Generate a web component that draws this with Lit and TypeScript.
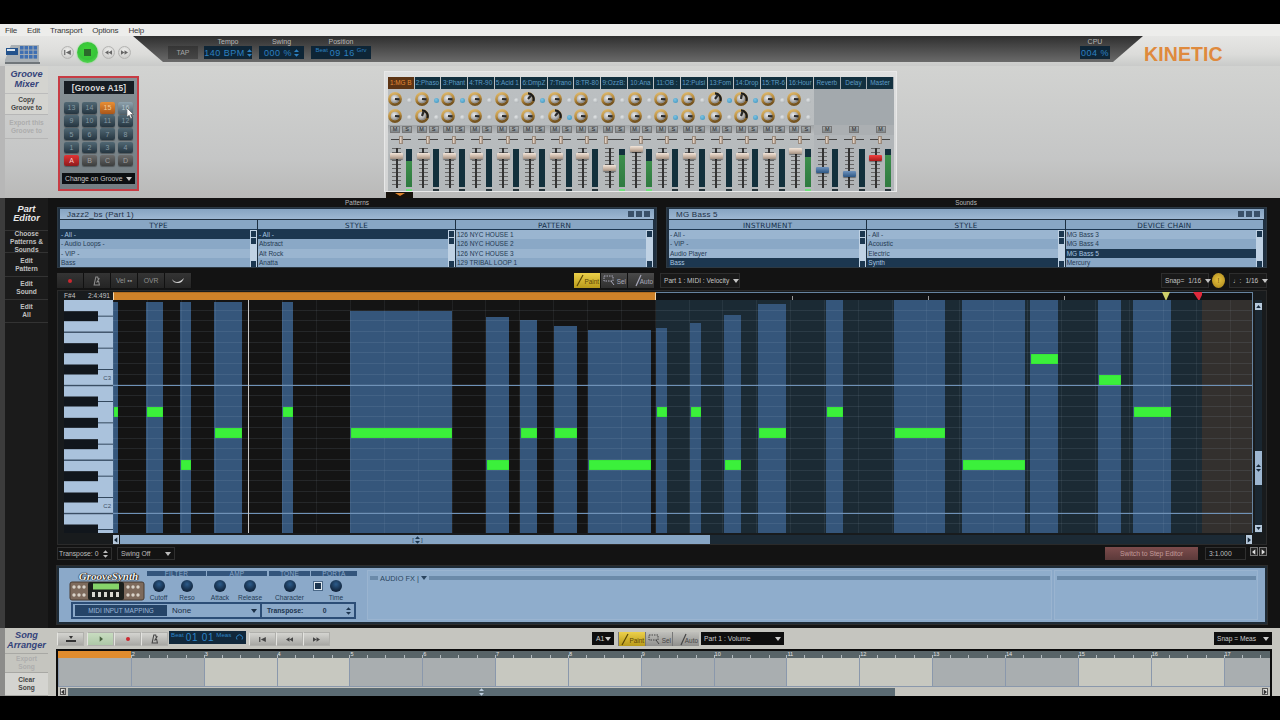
import { LitElement, html, css, svg, nothing } from "lit";
import { customElement } from "lit/decorators.js";

const CHANNELS = ["1:MG B","2:Phaso","3:Phant","4:TR-90","5:Acid 1","6:DmpZ","7:Trano","8:TR-80","9:OzzB:","10:Ana","11:OB :","12:Pulsi","13:Fom","14:Drop","15:TR-6","16:Hour","Reverb","Delay","Master"];
const BLUE_TOP = [1,2,5,10,12,13];
const BLUE_BOT = [6,10,11,13];
const DARK_TOP: Record<number, number> = {5:-50,12:-55,13:-80};
const DARK_BOT: Record<number, number> = {1:-70,6:-50,13:-70};
const FADER_Y: Record<number, number> = {8:19,9:0,15:2,16:21,17:25,18:9};
const METER: Record<number, number> = {0:26,8:32,9:26,15:30,18:32};

const GROOVES = [
  ["13","14","15","16"],["9","10","11","12"],["5","6","7","8"],["1","2","3","4"],["A","B","C","D"],
];

const PATTERN_LISTS = [
  { head:"TYPE", rows:["- All -","- Audio Loops -","- VIP -","Bass"], sel:0, thumb:[0,1] },
  { head:"STYLE", rows:["- All -","Abstract","Alt Rock","Anatta"], sel:0, thumb:[0,1] },
  { head:"PATTERN", rows:["126 NYC HOUSE 1","126 NYC HOUSE 2","126 NYC HOUSE 3","129 TRIBAL LOOP 1"], sel:-1, thumb:[0] },
];
const SOUND_LISTS = [
  { head:"INSTRUMENT", rows:["- All -","- VIP -","Audio Player","Bass"], sel:3, thumb:[0,1] },
  { head:"STYLE", rows:["- All -","Acoustic","Electric","Synth"], sel:3, thumb:[0,1,2] },
  { head:"DEVICE CHAIN", rows:["MG Bass 3","MG Bass 4","MG Bass 5","Mercury"], sel:2, thumb:[2] },
];

// x0, x1 (page px), top of the velocity bar, note row
const NOTES: [number,number,number,number][] = [
  [113,118,302,10],[146,163,302,10],[180,191,302,15],[214,242,302,12],[282,293,302,10],
  [350,452,311,12],[486,509,317,15],[520,537,320,12],[554,577,326,12],[588,651,330,15],
  [656,667,328,10],[690,701,323,10],[724,741,315,15],[758,786,304,12],[826,843,300,10],
  [894,945,300,12],[962,1025,300,15],[1030,1058,300,5],[1098,1121,300,7],[1133,1171,300,10],
];
const ROW = 10.667;
const BLACK_ROWS = [1,4,6,9,11,13,16,18,21];

const SEGMENTS = [0,0,1,1,0,0,1,1,0,0,1,1,0,0,1,1,0];

const updown = () => html`<svg class="ud" viewBox="0 0 6 9" width="5" height="8"><path d="M3 0 6 3.4H0zM3 9 0 5.6H6z" fill="currentColor"/></svg>`;
const triR = () => html`<svg viewBox="0 0 6 8" width="4" height="6"><path d="M1 0 6 4 1 8z" fill="currentColor"/></svg>`;
const triL = () => html`<svg viewBox="0 0 6 8" width="4" height="6"><path d="M5 0 0 4 5 8z" fill="currentColor"/></svg>`;
const triU = () => html`<svg viewBox="0 0 6 4" width="5" height="3"><path d="M3 0 6 4H0z" fill="currentColor"/></svg>`;
const triD = () => html`<svg viewBox="0 0 6 4" width="5" height="3"><path d="M3 4 6 0H0z" fill="currentColor"/></svg>`;
const prev = () => html`<svg viewBox="0 0 8 6" width="7" height="5"><path d="M0 0H1.4V6H0zM8 0V6L2 3z" fill="currentColor"/></svg>`;
const rew = () => html`<svg viewBox="0 0 9 6" width="7" height="5"><path d="M4.5 0V6L0 3zM9 0V6L4.5 3z" fill="currentColor"/></svg>`;
const ff = () => html`<svg viewBox="0 0 9 6" width="7" height="5"><path d="M0 0V6L4.5 3zM4.5 0V6L9 3z" fill="currentColor"/></svg>`;
const metro = () => html`<svg viewBox="0 0 10 12" width="8" height="10"><path d="M3.5 1h2.4L8 11H1.4zM4.5 8 8 2.5" fill="none" stroke="currentColor" stroke-width="1.3"/></svg>`;

function knob(ch: number, row: number) {
  const dark = row === 0 ? DARK_TOP[ch] : DARK_BOT[ch];
  const isDark = dark !== undefined;
  const a = ((isDark ? dark : 5) * Math.PI) / 180;
  const px = 7 + Math.cos(a) * 4.6, py = 7 + Math.sin(a) * 4.6;
  return html`<svg class="knob" viewBox="0 0 14 14" width="14" height="14">
    <circle cx="7" cy="7" r="5.6" fill="none" stroke="url(#kring)" stroke-width="2.6"/>
    ${isDark ? svg`<path d="M7 1.4A5.6 5.6 0 0 1 12.3 9" fill="none" stroke="#1c1c1c" stroke-width="2.2"/>` : nothing}
    <circle cx="7" cy="7" r="4" fill="url(#kcap)"/>
    <line x1="7" y1="7" x2=${px} y2=${py} stroke="#2a2a2a" stroke-width="2.2"/>
  </svg>`;
}

@customElement("app-root")
export class AppRoot extends LitElement {
  static styles = css`
    :host { display:block; width:1280px; height:720px; background:#000; font-family:"Liberation Sans",Arial,sans-serif; overflow:hidden; }
    * { box-sizing:border-box; }
    .app { display:flex; flex-direction:column; height:720px; padding:24px 0; }
    svg { display:block; flex:none; }
    .defs { width:0; height:0; }

    .menu { height:12px; background:#ededeb; display:flex; gap:10px; padding-left:5px; align-items:center; font-size:8px; color:#3a3a3a; flex:none; }
    .menu span { letter-spacing:-.2px; }

    .transport { height:30px; flex:none; display:flex; background:linear-gradient(#e6e6e4,#dcdcda 60%,#c9cac9); }
    .t-left { width:133px; flex:none; display:flex; align-items:center; padding:6px 0 0 5px; }
    .t-logo { margin:-1px 21px 0 0; }
    .round { width:13px; height:13px; border-radius:50%; background:radial-gradient(circle at 50% 35%,#f0f0ee,#c4c4c2); border:1px solid #b4b4b2; color:#666; display:flex; align-items:center; justify-content:center; flex:none; margin-top:-4px; }
    .go { width:21px; height:21px; border-radius:50%; background:radial-gradient(circle at 50% 40%,#3ed636,#37c43a 55%,#71e66a); box-shadow:0 0 2px #7bd97b; display:flex; align-items:center; justify-content:center; margin:-4px 4px 0 3px; flex:none; }
    .go i { width:7px; height:7px; background:#2b6a2b; display:block; }
    .band { width:1010px; height:26px; flex:none; clip-path:polygon(0 0,100% 0,980px 100%,30px 100%); background:linear-gradient(#2f2f2f,#6a6a6a); display:flex; padding:2px 33px 0 35px; color:#b5b5b5; }
    .tap { width:30px; height:13px; margin:8px 6px 0 0; background:linear-gradient(#353535,#474747); font-size:7px; display:flex; align-items:center; justify-content:center; color:#a4a4a4; }
    .field { display:flex; flex-direction:column; align-items:center; margin-right:7px; }
    .field label { font-size:7px; height:8px; line-height:8px; color:#b8b8b8; }
    .lcd { height:13px; background:#0e2536; color:#2c80c0; font-size:9px; letter-spacing:.5px; display:flex; align-items:center; justify-content:center; gap:2px; white-space:nowrap; }
    .lcd small { font-size:6px; align-self:flex-start; letter-spacing:0; margin-top:1px; }
    .cpu { margin:0 0 0 auto; }
    .kinetic { color:#df8a3d; font-weight:bold; font-size:19.5px; margin:9px 0 0 1px; letter-spacing:.1px; line-height:18px; }

    .groove-row { height:132px; flex:none; display:flex; background:linear-gradient(#d2d3d1,#c5c6c6 70%,#b9b9b8); }
    .side { width:50px; flex:none; padding-left:5px; display:flex; flex-direction:column; }
    .groove-row .side { background:linear-gradient(90deg,#b7b7b7 0 5px,transparent 5px); }
    .song-row .side { background:linear-gradient(90deg,#8c8c8a 0 5px,transparent 5px); }
    .part-row .side { background:linear-gradient(90deg,#3c3c3c 0 5px,#1b1b1b 5px 48px,transparent 48px); }
    .tab { width:43px; flex:none; display:flex; align-items:center; justify-content:center; text-align:center; font-size:6.6px; line-height:8px; font-weight:bold; color:#444; border-bottom:1px solid #b6b6b6; white-space:pre-line; }
    .tab.off { color:#adadad; }
    .tab.title { font-style:italic; font-size:9.2px; line-height:9.5px; color:#34437a; border-bottom-color:#bcbcbc; }
    .tab.dk { color:#c0c0c0; border-bottom-color:#333; }
    .tab.dk.title { color:#e8e8e8; }
    .song-row .tab { border-bottom-color:#a8a8a4; }
    .tab.lite { background:#d4d4d0; }

    .g-panel { width:81px; height:115px; margin:10px 0 0 8px; border:2px solid #c73c44; background:linear-gradient(#87928f,#737d82); background:linear-gradient(#869196,#737d82); padding:3px 0 0 4px; position:relative; flex:none; }
    .g-title { width:70px; height:13px; background:#161c22; color:#d8d8d8; font-size:8.4px; font-weight:bold; display:flex; align-items:center; justify-content:center; letter-spacing:.2px; }
    .g-grid { display:grid; grid-template-columns:repeat(4,15px); grid-auto-rows:11.5px; column-gap:3px; row-gap:1.7px; margin-top:8px; }
    .g-btn { border-radius:2px; background:linear-gradient(#516874,#253540); color:#8599a4; font-size:7px; display:flex; align-items:center; justify-content:center; box-shadow:0 1px 1px #0005; }
    .g-btn.on { background:linear-gradient(#e88f35,#a9561a); color:#f3cc98; }
    .g-btn.red { background:linear-gradient(#e23434,#8d1a1c); color:#f6c9c9; }
    .g-btn.gr { background:linear-gradient(#6c6c6c,#3c3e3e); color:#a0a0a0; }
    .g-btn.hov { background:linear-gradient(#8fa3ae,#50626d); color:#b8c6cd; }
    .g-sel { width:73px; height:11px; margin:7px 0 0 -2px; background:#0c0f12; color:#c8c8c8; font-size:6.8px; display:flex; align-items:center; justify-content:space-between; padding:0 3px; }
    .arr { width:0; height:0; border:3px solid transparent; border-top:4px solid currentColor; border-bottom:0; display:block; flex:none; }
    .cursor { position:absolute; left:67px; top:30px; }

    .mixer-wrap { margin:5px 0 0 245px; flex:none; }
    .mixer { width:513px; height:121px; padding:5px 4px 0 3px; background:linear-gradient(#dfe0e0,#d3d4d4); border:1px solid #e8e8e8; display:grid; grid-template-columns:repeat(19,26.63px); }
    .ch { display:flex; flex-direction:column; height:114px; background:linear-gradient(#bcc0c2,#b4b8ba); }
    .ch.rt { background:linear-gradient(#a3a9ad 0 48px,#b1b5b8 48px); }
    .ch-h { height:12px; flex:none; background:#12303f; color:#5d9cc6; font-size:6.4px; line-height:12px; margin-right:1px; text-align:center; white-space:nowrap; overflow:hidden; }
    .ch-h.on { background:#5c3414; color:#e58b34; }
    .ch-knobs { height:36px; flex:none; padding-top:3px; display:flex; flex-direction:column; gap:3px; }
    .k-row { display:flex; height:14px; }
    .k-dot { width:5px; height:5px; border-radius:50%; margin:6px 0 0 5px; background:radial-gradient(circle at 40% 35%,#e4e7e8,#9ea3a6); }
    .k-dot.b { background:radial-gradient(circle at 40% 35%,#7cc3e4,#3a8fb8); }
    .ms { height:10px; flex:none; display:flex; gap:2px; padding:1px 0 0 2px; background:linear-gradient(#a0a4a6,#bdc0c2); }
    .ch.rt .ms { justify-content:center; padding-left:0; background:#abafb2; }
    .ms b { width:10px; height:7px; background:linear-gradient(#a8adb0,#7f868a); border:1px solid #777; font-size:5.5px; line-height:5px; color:#222; text-align:center; font-weight:normal; }
    .pan { height:11px; flex:none; position:relative; }
    .pan::before { content:""; position:absolute; left:3px; width:20px; top:4px; height:1px; background:#444; }
    .pan i { position:absolute; top:1px; width:4px; height:8px; background:linear-gradient(90deg,#efe0d2,#b09c8c); border:1px solid #9a8a7c; }
    .fad { height:45px; flex:none; position:relative; }
    .fad-track { position:absolute; left:4px; width:9px; top:2px; height:40px; background:repeating-linear-gradient(#666 0 1px,transparent 1px 4px); }
    .fad-track::after { content:""; position:absolute; left:3.5px; width:2px; top:0; bottom:0; background:#333; }
    .cap { position:absolute; left:2px; width:13px; height:6px; border-radius:1px; background:linear-gradient(#f3e6da,#c8b4a4 60%,#a08f80); box-shadow:0 1px 1px #0006; }
    .cap.bl { background:linear-gradient(#6f93bd,#2c5684); }
    .cap.rd { background:linear-gradient(#f04040,#a81818); }
    .meter { position:absolute; left:18px; width:6px; top:3px; height:38px; background:#12303c; display:flex; flex-direction:column; justify-content:flex-end; }
    .meter i { display:block; background:linear-gradient(#3d8f4c,#2f7a40); }
    .led { position:absolute; left:18px; width:6px; top:43px; height:2px; background:#26343a; }
    .led.on { background:#6fe07a; }
    .m-tab { width:27px; height:6px; margin-left:2px; background:#17120c; display:flex; justify-content:center; color:#e0852c; }
    .m-tab i { width:0; height:0; border:5px solid transparent; border-top:3px solid currentColor; border-bottom:0; margin-top:1px; }

    .part-row { height:430px; flex:none; display:flex; background:#131313; }
    .p-main { width:1210px; margin-left:7px; display:flex; flex-direction:column; flex:none; color:#bbb; }
    .p-labels { height:9px; display:grid; grid-template-columns:600px 600px; column-gap:9px; font-size:6.4px; line-height:9px; text-align:center; color:#b9b9b9; flex:none; }
    .browsers { display:grid; grid-template-columns:600px 601px; column-gap:9px; height:61px; flex:none; }
    .br { border:1px solid #2d3943; background:#203040; padding:1px 2px 0; height:61px; overflow:hidden; }
    .br-title { height:10px; background:linear-gradient(#86a4c2,#9db7d2); color:#1e3046; font-size:8px; padding-left:7px; display:flex; justify-content:space-between; align-items:center; letter-spacing:.25px; margin-bottom:1px; }
    .br-ico { display:flex; gap:2px; margin-right:4px; color:#3a5068; }
    .br-ico i { width:6px; height:6px; background:currentColor; display:block; }
    .br-cols { display:grid; grid-template-columns:1fr 1fr 1fr; }
    .br-col { border-right:1px solid #1d2f40; min-width:0; }
    .br-head { height:10px; background:#88a6c4; color:#122c46; font-size:7.2px; font-family:"DejaVu Sans",sans-serif; text-align:center; line-height:11px; border-bottom:1px solid #1d3650; letter-spacing:.2px; overflow:hidden; }
    .br-body { display:flex; height:38px; }
    .br-rows { flex:1; min-width:0; }
    .br-row { height:9.4px; font-size:6.5px; line-height:9.4px; padding-left:1px; color:#253a52; background:#9ab5d0; white-space:nowrap; overflow:hidden; }
    .br-row.alt { background:#8aa8c6; }
    .br-row.sel { background:#1c3750; color:#a9c6e0; }
    .br-sc { width:7px; flex:none; background:#c0d2e4; display:flex; flex-direction:column; gap:1px; padding:1px; }
    .br-sc i { height:6px; background:#1c3750; display:block; }
    .br-sc i.end { margin-top:auto; }

    .p-tools { height:15px; margin-top:5px; display:flex; flex:none; font-size:6.8px; }
    .dbtn { width:27px; height:15px; background:linear-gradient(#343434,#242424); border-right:1px solid #111; display:flex; align-items:center; justify-content:center; color:#8f8f8f; flex:none; }
    .dbtn .dot { width:4px; height:4px; border-radius:50%; background:#cc2830; }
    .modes { display:flex; margin-left:381px; flex:none; }
    .mode { width:27px; height:15px; display:flex; align-items:center; justify-content:flex-end; font-size:6.4px; color:#aab; background:linear-gradient(#4a4a4a,#2f2f2f); border-left:1px solid #111; position:relative; padding:2px 1px 0 0; overflow:hidden; white-space:nowrap; }
    .mode.on { background:linear-gradient(#ecd04a,#b89a1a); color:#5a4604; }
    .mode svg { position:absolute; left:2px; top:1px; }
    .dsel { border:1px solid #2d2d2d; height:15px; display:flex; align-items:center; gap:4px; padding:0 3px; color:#c4c4c4; font-size:6.6px; background:#191919; flex:none; white-space:nowrap; }
    .d-part { margin-left:6px; width:80px; justify-content:space-between; }
    .right { margin-left:auto; display:flex; flex:none; align-items:center; }
    .gold { width:13px; height:15px; border-radius:50%; background:radial-gradient(circle at 50% 45%,#e6c33e,#a67f18); margin:0 4px 0 3px; color:#5c4405; font-size:7px; text-align:center; line-height:15px; }

    .roll-panel { height:255px; margin-top:2px; border:1px solid #2a2a2a; padding:1px 0 0 6px; flex:none; background:#181b1d; }
    .ruler-row { display:flex; height:8px; }
    .r-info { width:49px; flex:none; display:flex; justify-content:space-between; font-size:6.6px; line-height:8px; color:#c4c4c4; padding-right:3px; }
    .ruler { width:1140px; height:8px; flex:none; position:relative; background:#101214; border-top:1px solid #66839f; border-right:1px solid #66839f; }
    .ruler .orange { position:absolute; left:0; top:-1px; width:543px; height:9px; background:#cf8229; border:1px solid #f3d8ae; border-top-color:#b56f20; }
    .ruler u { position:absolute; top:3px; width:1px; height:4px; background:#999; }
    .mk { position:absolute; top:-1px; }
    .roll-body { display:flex; height:233px; }
    .keys { width:49px; height:233px; flex:none; position:relative; }
    .keys span { position:absolute; right:2px; font-size:6px; color:#3a4e66; line-height:7px; }
    .roll { width:1140px; height:233px; flex:none; position:relative; overflow:hidden; border-right:1px solid #66839f; background:linear-gradient(90deg,#141414 0 543px,#1b2a34 543px 1089px,#33302e 1089px); }
    .vel { position:absolute; bottom:0; background:#35567b; }
    .lines { position:absolute; inset:0; background:
      repeating-linear-gradient(180deg,transparent 0 9.667px,rgba(185,205,225,.1) 9.667px 10.667px),
      repeating-linear-gradient(90deg,rgba(200,215,230,.07) 0 1px,transparent 1px 33.857px); }
    .oct { position:absolute; left:0; right:0; height:1px; background:#6f92b8; }
    .head { position:absolute; left:135px; top:0; bottom:0; width:1px; background:#c9c9c9; }
    .note { position:absolute; height:10px; background:#3bf03b; box-shadow:inset 0 0 1px #1c9c1c; }
    .vsc { width:7px; height:233px; margin-left:2px; background:#1a2731; display:flex; flex-direction:column; flex:none; color:#16283a; }
    .vsc i { display:flex; height:7px; background:#b6c9dc; align-items:center; justify-content:center; flex:none; }
    .vsc i.up { margin-top:3px; }
    .vsc i.th { height:34px; margin-top:141px; background:#9db6d0; }
    .vsc i.dn { margin-top:auto; margin-bottom:1px; }
    .hsc { margin-left:49px; height:10px; margin-top:1px; width:1140px; display:flex; align-items:stretch; }
    .hsc b { width:6px; margin:1px 1px 0 0; background:#b6c9dc; color:#16283a; display:flex; align-items:center; justify-content:center; flex:none; }
    .hsc .fill { width:590px; flex:none; margin-top:1px; background:#86a5c4; display:flex; justify-content:center; color:#1c3750; padding-left:5px; font-size:6px; line-height:8px; align-items:center; gap:1px; }
    .hsc .rest { flex:1; margin:1px 1px 0 0; background:#1c2a35; }

    .opts { height:13px; margin-top:2px; display:flex; flex:none; font-size:6.8px; color:#bdbdbd; }
    .osel { height:13px; border:1px solid #2f2f2f; display:flex; align-items:center; justify-content:space-between; padding:0 3px 0 1px; flex:none; }
    .step { width:93px; height:13px; background:linear-gradient(#7c4c4c,#5c3a3a); color:#c39a9a; font-size:6.8px; display:flex; align-items:center; justify-content:center; margin-right:7px; }
    .sq { width:8px; height:9px; margin-left:1px; background:#232323; border:1px solid #777; color:#ddd; display:flex; align-items:center; justify-content:center; }

    .synth { height:58px; margin-top:6px; border:2px solid #1e2b36; outline:1px solid #2c2c2c; background:#8ba9c9; display:flex; padding:1px 0 0 10px; flex:none; color:#233b55; }
    .s-left { width:289px; flex:none; }
    .s-top { display:flex; height:32px; }
    .s-logo { width:76px; flex:none; }
    .s-name { font-family:"Liberation Serif",serif; font-style:italic; font-weight:bold; font-size:11px; line-height:10px; color:#f4f4f4; text-align:center; text-shadow:0 0 1px #000,0 0 1px #000,1px 0 1px #222; margin-top:2px; margin-left:3px; }
    .s-sec { flex:none; margin-right:1px; }
    .s-head { height:5px; margin-top:2px; background:#33557c; color:#8ba9c9; font-size:6.5px; line-height:5px; text-align:center; overflow:hidden; letter-spacing:.3px; }
    .s-items { display:flex; }
    .s-item { display:flex; flex-direction:column; align-items:center; font-size:6.6px; flex:none; white-space:nowrap; }
    .s-k { width:12px; height:12px; border-radius:50%; margin-top:4px; background:radial-gradient(circle at 50% 35%,#2c5b8a,#12263e 70%); }
    .s-c { width:8px; height:8px; margin-top:6px; margin-bottom:-2px; background:#1d3650; border:1px solid #dfe8f0; outline:1px solid #4a6888; }
    .s-item span { margin-top:2px; line-height:8px; }
    .s-map { width:285px; height:17px; margin:1px 0 0 2px; border:2px solid #2c4d76; display:flex; align-items:center; font-size:8px; }
    .s-map .dark { width:92px; height:11px; margin-left:2px; background:#254468; color:#9cb8d8; font-size:6.4px; display:flex; align-items:center; justify-content:center; flex:none; }
    .s-map .none { width:93px; margin-left:2px; display:flex; justify-content:space-between; align-items:center; padding:0 3px; font-size:8px; border-right:2px solid #2c4d76; height:13px; flex:none; color:#1b2f47; }
    .s-map .tr { flex:1; display:flex; justify-content:space-between; padding:0 3px 0 5px; font-weight:bold; font-size:6.8px; align-items:center; color:#1d3550; }
    .fxp { height:50px; margin-top:1px; border:1px solid #9ab4d0; background:#8fadcc; flex:none; padding:4px 1px 0 2px; font-size:7.4px; color:#2a4560; }
    .fx1 { width:685px; margin-left:9px; }
    .fx2 { width:204px; margin-left:2px; }
    .fx-h { display:flex; align-items:center; gap:2px; height:6px; white-space:nowrap; }
    .fx-h u { flex:none; height:4px; background:#6b8aa9; display:block; }
    .fx-h u.g { flex:1; }

    .song-row { height:68px; flex:none; display:flex; background:#c5c5bf; }
    .s-main { width:1215px; margin-left:7px; flex:none; }
    .s-tools { height:21px; padding-top:4px; display:flex; font-size:6.6px; color:#333; }
    .lbtn { width:27px; height:14px; background:linear-gradient(#d4d4d0,#a8a8a4); border:1px solid #b0b0ac; border-left-color:#e4e4e0; display:flex; align-items:center; justify-content:center; color:#444; flex:none; }
    .lbtn.pl { background:linear-gradient(#c8dcc0,#aec8a8); color:#47603f; }
    .lbtn .dot { width:4px; height:4px; border-radius:50%; background:#cc2830; }
    .lbtn.s1 { margin-right:3px; }
    .song-lcd { width:77px; height:13px; margin:-1px 3px 0 1px; background:#11283b; color:#2c84c6; font-size:10px; display:flex; padding:0 2px; letter-spacing:.7px; gap:2px; align-items:center; flex:none; }
    .song-lcd small { font-size:6.2px; letter-spacing:0; align-self:flex-start; }
    .song-lcd svg { margin-left:auto; }
    .lbtns { display:flex; flex:none; }
    .sel-a { margin-left:262px; width:22px; height:13px; background:#0e0e0e; color:#ccc; font-size:6.8px; display:flex; align-items:center; justify-content:space-between; padding:0 3px 0 4px; flex:none; }
    .modes.lt { margin-left:4px; }
    .modes.lt .mode { height:14px; background:linear-gradient(#c0c0bc,#8f8f8d); color:#444; border-left-color:#777; }
    .modes.lt .mode.on { background:linear-gradient(#ecd04a,#b89a1a); color:#5a4604; }
    .sel-p { margin-left:2px; width:83px; height:13px; background:#0e0e0e; color:#ccc; font-size:6.8px; display:flex; align-items:center; justify-content:space-between; padding:0 3px; flex:none; }
    .sel-s { margin-left:auto; width:58px; height:13px; background:#0e0e0e; color:#ccc; font-size:6.6px; display:flex; align-items:center; justify-content:space-between; padding:0 3px; flex:none; }
    .tl { height:47px; border:2px solid #0c0c0c; border-bottom:0; overflow:hidden; width:1216px; margin-left:-1px; }
    .tl-row { display:flex; }
    .tl-seg { width:72.85px; flex:none; }
    .tl-rul { height:7px; background:#586468; }
    .tl-rul .tl-seg { height:7px; color:#e4e4e4; font-size:5.5px; line-height:6px; padding-left:1px; background:repeating-linear-gradient(90deg,#b4bcc0 0 1px,transparent 1px 18.2px) left bottom/100% 3px no-repeat; }
    .tl-rul .tl-seg.o { background:#e08c2e; }
    .tl-track { height:29px; }
    .tl-track .tl-seg { height:29px; background:#a9aeb0; border-left:1px solid #8a98ac; border-bottom:1px solid #8a98ac; }
    .tl-track .tl-seg.l { background:#c7c8c0; }
    .tl-sc { height:9px; display:flex; padding:1px 2px 0; background:#c5c5bf; }
    .tl-sc b { width:6px; height:7px; background:#e4e4e0; border:1px solid #555; color:#333; display:flex; align-items:center; justify-content:center; flex:none; }
    .tl-sc .thumb { width:827px; margin-left:2px; height:8px; background:#5b6b73; color:#bcd; display:flex; align-items:center; justify-content:center; flex:none; }
  `;

  private modes(cls = "") {
    return html`<div class="modes ${cls}">
      <div class="mode on"><svg width="12" height="13" viewBox="0 0 12 13"><path d="M1 12 7 1" stroke="#5a4604" stroke-width="1.2"/></svg><span>Paint</span></div>
      <div class="mode"><svg width="12" height="13" viewBox="0 0 12 13"><rect x="1" y="2" width="9" height="5" fill="none" stroke="currentColor" stroke-dasharray="1.5 1"/><path d="M8 7 11 11" stroke="currentColor"/></svg><span>Sel</span></div>
      <div class="mode"><svg width="14" height="13" viewBox="0 0 14 13"><path d="M6 12 11 1" stroke="currentColor" stroke-width="1.2"/></svg><span>Auto</span></div>
    </div>`;
  }

  private tab(text: string, h: number, cls = "") {
    return html`<div class="tab ${cls}" style="height:${h}px">${text}</div>`;
  }

  private channel(name: string, i: number) {
    const rt = i >= 16;
    const y = FADER_Y[i] ?? 7;
    const capCls = i === 16 || i === 17 ? "bl" : i === 18 ? "rd" : "";
    const m = METER[i];
    return html`<div class="ch ${rt ? "rt" : ""}">
      <div class="ch-h ${i === 0 ? "on" : ""}">${name}</div>
      <div class="ch-knobs">
        ${rt ? nothing : [0, 1].map((r) => html`<div class="k-row">
          ${knob(i, r)}<i class="k-dot ${(r === 0 ? BLUE_TOP : BLUE_BOT).includes(i) ? "b" : ""}"></i></div>`)}
      </div>
      <div class="ms"><b>M</b>${rt ? nothing : html`<b>S</b>`}</div>
      <div class="pan"><i style="left:${i === 8 ? 3 : 11}px"></i></div>
      <div class="fad">
        <div class="fad-track"></div>
        <div class="meter">${m ? html`<i style="height:${m}px"></i>` : nothing}</div>
        <div class="led ${m && i !== 18 ? "on" : ""}"></div>
        <div class="cap ${capCls}" style="top:${y}px"></div>
      </div>
    </div>`;
  }

  private browser(title: string, lists: typeof PATTERN_LISTS) {
    return html`<div class="br">
      <div class="br-title"><span>${title}</span><span class="br-ico"><i></i><i></i><i></i></span></div>
      <div class="br-cols">
        ${lists.map((l) => html`<div class="br-col">
          <div class="br-head">${l.head}</div>
          <div class="br-body">
            <div class="br-rows">${l.rows.map((r, i) => html`<div class="br-row ${i === l.sel ? "sel" : i % 2 ? "alt" : ""}">${r}</div>`)}</div>
            <div class="br-sc"><i></i>${l.thumb.length > 1 ? html`<i></i>` : nothing}<i class="end"></i></div>
          </div>
        </div>`)}
      </div>
    </div>`;
  }

  private keys() {
    return html`<div class="keys">
      <svg width="49" height="233" viewBox="0 0 49 233">
        <rect width="49" height="233" fill="#aac2dc"/>
        ${BLACK_ROWS.map((r) => svg`<rect x="0" y=${r * ROW + 0.5} width="34" height="10" fill="#11161c"/><rect x="34" y=${r * ROW + 5} width="15" height="1" fill="#33485e"/>`)}
        ${[2, 7, 14, 19].map((r) => svg`<rect x="0" y=${(r + 1) * ROW - 0.5} width="49" height="1.4" fill="#3a4e64"/>`)}
      </svg>
      <span style="top:75px">C3</span><span style="top:203px">C2</span>
    </div>`;
  }

  private roll() {
    return html`<div class="roll">
      ${NOTES.map(([a, b, top]) => html`<div class="vel" style="left:${a - 113}px;width:${b - a}px;top:${top - 300}px"></div>`)}
      <div class="lines"></div>
      <div class="oct" style="top:85px"></div><div class="oct" style="top:213px"></div>
      <div class="head"></div>
      ${NOTES.map(([a, b, , r]) => html`<div class="note" style="left:${a - 112}px;width:${b - a - 1}px;top:${r * ROW + 0.3}px"></div>`)}
    </div>`;
  }

  private synthLeft() {
    const sec = (name: string, w: number, items: [string, number, boolean?][]) => html`<div class="s-sec" style="width:${w}px">
      <div class="s-head">${name}</div>
      <div class="s-items">${items.map(([l, iw, chk]) => html`<div class="s-item" style="width:${iw}px">
        ${chk ? html`<i class="s-c"></i>` : html`<i class="s-k"></i>`}<span>${l}</span></div>`)}</div>
    </div>`;
    return html`<div class="s-left">
      <div class="s-top">
        <div class="s-logo">
          <div class="s-name">GrooveSynth</div>
          <svg width="76" height="20" viewBox="0 0 76 20">
            <rect x="1" y="1" width="74" height="18" rx="2" fill="#7d6a5c"/>
            <rect x="1" y="1" width="74" height="18" rx="2" fill="none" stroke="#4a3c33"/>
            <rect x="19" y="1" width="36" height="18" rx="2" fill="#1b1f1c"/>
            <rect x="24" y="2.5" width="26" height="6" fill="#86d46a"/>
            ${[23, 29, 35, 41, 47].map((x) => svg`<rect x=${x} y="11" width="3" height="5" fill="#d8d8d0"/>`)}
            ${[5, 10, 15, 59, 64, 69].map((x) => svg`<circle cx=${x} cy="6" r="1.7" fill="#d8d2c8"/><circle cx=${x} cy="14" r="1.7" fill="#d8d2c8"/>`)}
          </svg>
        </div>
        <div class="s-sec" style="width:1px"></div>
        ${sec("FILTER", 59, [["Cutoff", 23], ["Reso", 34]])}
        ${sec("AMP", 60, [["Attack", 26], ["Release", 34]])}
        <div style="width:1px"></div>
        ${sec("TONE", 41, [["Character", 41]])}
        ${sec("PORTA", 46, [["", 14, true], ["Time", 22]])}
      </div>
      <div class="s-map">
        <div class="dark">MIDI INPUT MAPPING</div>
        <div class="none"><span>None</span><i class="arr"></i></div>
        <div class="tr"><span>Transpose:</span><span>0</span>${updown()}</div>
      </div>
    </div>`;
  }

  render() {
    return html`<div class="app">
      <svg class="defs"><defs>
        <linearGradient id="kring" x1="0" y1="0" x2="0.3" y2="1"><stop offset="0" stop-color="#dcb86e"/><stop offset=".55" stop-color="#b98c3c"/><stop offset="1" stop-color="#755420"/></linearGradient>
        <radialGradient id="kcap" cx=".4" cy=".35" r=".8"><stop offset="0" stop-color="#ececec"/><stop offset=".6" stop-color="#aeaeae"/><stop offset="1" stop-color="#5e5e5e"/></radialGradient>
      </defs></svg>

      <div class="menu"><span>File</span><span>Edit</span><span>Transport</span><span>Options</span><span>Help</span></div>

      <div class="transport">
        <div class="t-left">
          <svg class="t-logo" width="35" height="22" viewBox="0 0 35 22">
            <path d="M0 17 6 2H34V19H0z" fill="#aab0b4"/>
            <rect x="1" y="5" width="12" height="7" fill="#23528c"/><rect x="2" y="6" width="8" height="2" fill="#dde6ee"/>
            ${[15, 19.5, 24, 28.5].map((x) => [3, 7.5, 12].map((y) => svg`<rect x=${x} y=${y} width="3.6" height="3.6" fill="#3f6fb2"/>`))}
            <rect y="19" width="35" height="2" fill="#70767a"/>
          </svg>
          <div class="round">${prev()}</div>
          <div class="go"><i></i></div>
          <div class="round" style="margin-right:3px">${rew()}</div>
          <div class="round">${ff()}</div>
        </div>
        <div class="band">
          <div class="tap">TAP</div>
          <div class="field"><label>Tempo</label><div class="lcd" style="width:48px">140 BPM ${updown()}</div></div>
          <div class="field"><label>Swing</label><div class="lcd" style="width:45px">000 % ${updown()}</div></div>
          <div class="field"><label>Position</label><div class="lcd" style="width:60px"><small>Beat</small>09 16<small>Grv</small></div></div>
          <div class="field cpu"><label>CPU</label><div class="lcd" style="width:30px">004 %</div></div>
        </div>
        <div class="kinetic">KINETIC</div>
      </div>

      <div class="groove-row">
        <div class="side">
          ${this.tab("Groove\nMixer", 28, "title lite")}
          ${this.tab("Copy\nGroove to", 21, "lite")}
          ${this.tab("Export this\nGroove to", 24, "off")}
        </div>
        <div class="g-panel">
          <div class="g-title">[Groove A15]</div>
          <div class="g-grid">
            ${GROOVES.flat().map((g) => html`<div class="g-btn ${g === "15" ? "on" : g === "16" ? "hov" : g === "A" ? "red" : "BCD".includes(g) ? "gr" : ""}">${g}</div>`)}
          </div>
          <div class="g-sel"><span>Change on Groove</span><i class="arr"></i></div>
          <svg class="cursor" width="7" height="11" viewBox="0 0 7 11"><path d="M0 0 6.5 6.5H3.6L5.2 10 3.8 10.8 2.2 7.2 0 9z" fill="#fff" stroke="#222" stroke-width=".4"/></svg>
        </div>
        <div class="mixer-wrap">
          <div class="mixer">${CHANNELS.map((c, i) => this.channel(c, i))}</div>
          <div class="m-tab"><i></i></div>
        </div>
      </div>

      <div class="part-row">
        <div class="side">
          ${this.tab("Part\nEditor", 33, "title dk")}
          ${this.tab("Choose\nPatterns &\nSounds", 22, "dk")}
          ${this.tab("Edit\nPattern", 24, "dk")}
          ${this.tab("Edit\nSound", 23, "dk")}
          ${this.tab("Edit\nAll", 23, "dk")}
        </div>
        <div class="p-main">
          <div class="p-labels"><span>Patterns</span><span>Sounds</span></div>
          <div class="browsers">
            ${this.browser("Jazz2_bs (Part 1)", PATTERN_LISTS)}
            ${this.browser("MG Bass 5", SOUND_LISTS)}
          </div>

          <div class="p-tools">
            <div class="dbtn"><i class="dot"></i></div>
            <div class="dbtn">${metro()}</div>
            <div class="dbtn">Vel ▪▪</div>
            <div class="dbtn">OVR</div>
            <div class="dbtn"><svg width="14" height="7" viewBox="0 0 14 7"><path d="M1 2c3 4 7 4 12-1-1 3-3 5-6 5S2 5 1 2z" fill="#d4d4d4"/></svg></div>
            ${this.modes()}
            <div class="dsel d-part"><span>Part 1 : MIDI : Velocity</span><i class="arr"></i></div>
            <div class="right">
              <div class="dsel" style="width:48px;justify-content:space-between"><span>Snap=</span><span>1/16</span><i class="arr"></i></div>
              <div class="gold">!</div>
              <div class="dsel" style="width:38px;justify-content:space-between"><span>♩:</span><span>1/16</span><i class="arr"></i></div>
            </div>
          </div>

          <div class="roll-panel">
            <div class="ruler-row">
              <div class="r-info"><span>F#4</span><span>2:4:491</span></div>
              <div class="ruler">
                <div class="orange"></div>
                <u style="left:679px"></u><u style="left:815px"></u><u style="left:951px"></u>
                <svg class="mk" style="left:1049px" width="8" height="9" viewBox="0 0 8 9"><path d="M0 0H8L4 9z" fill="#cfd06a"/></svg>
                <svg class="mk" style="left:1080px" width="9" height="9" viewBox="0 0 9 9"><path d="M0 0H9V3L6 9z" fill="#e02a3c"/></svg>
              </div>
            </div>
            <div class="roll-body">
              ${this.keys()}
              ${this.roll()}
              <div class="vsc"><i class="up">${triU()}</i><i class="th">${updown()}</i><i class="dn">${triD()}</i></div>
            </div>
            <div class="hsc">
              <b>${triL()}</b>
              <div class="fill">[ ${updown()} ]</div>
              <div class="rest"></div>
              <b>${triR()}</b>
            </div>
          </div>

          <div class="opts">
            <div class="osel" style="width:55px"><span>Transpose: 0</span>${updown()}</div>
            <div class="osel" style="width:58px;margin-left:5px;padding-left:3px"><span>Swing Off</span><i class="arr"></i></div>
            <div class="right" style="align-items:flex-start">
              <div class="step">Switch to Step Editor</div>
              <div class="osel" style="width:41px;padding-left:3px"><span>3:1.000</span></div>
              <div class="sq" style="margin-left:4px">${triL()}</div><div class="sq">${triR()}</div>
            </div>
          </div>

          <div class="synth">
            ${this.synthLeft()}
            <div class="fxp fx1"><div class="fx-h"><u style="width:8px"></u><span>AUDIO FX</span><span>|</span><i class="arr"></i><u class="g"></u></div></div>
            <div class="fxp fx2"><div class="fx-h"><u class="g"></u></div></div>
          </div>
        </div>
      </div>

      <div class="song-row">
        <div class="side">
          ${this.tab("Song\nArranger", 26, "title")}
          ${this.tab("Export\nSong", 19, "off")}
          ${this.tab("Clear\nSong", 23, "lite")}
        </div>
        <div class="s-main">
          <div class="s-tools">
            <div class="lbtn s1"><svg width="10" height="6" viewBox="0 0 10 6"><path d="M0 4H10V6H0zM3 0H7L5 3z" fill="#333"/></svg></div>
            <div class="lbtn pl">${triR()}</div>
            <div class="lbtn"><i class="dot"></i></div>
            <div class="lbtn">${metro()}</div>
            <div class="song-lcd"><small>Beat</small>01 01<small>Meas</small>
              <svg width="9" height="9" viewBox="0 0 9 9"><path d="M2 6.5A3 3 0 1 1 7 6.5" fill="none" stroke="#2c84c6"/></svg></div>
            <div class="lbtns">
              <div class="lbtn">${prev()}</div>
              <div class="lbtn">${rew()}</div>
              <div class="lbtn">${ff()}</div>
            </div>
            <div class="sel-a"><span>A1</span><i class="arr"></i></div>
            ${this.modes("lt")}
            <div class="sel-p"><span>Part 1 : Volume</span><i class="arr"></i></div>
            <div class="sel-s"><span>Snap = Meas</span><i class="arr"></i></div>
          </div>
          <div class="tl">
            <div class="tl-row tl-rul">
              ${SEGMENTS.map((_, i) => html`<div class="tl-seg ${i === 0 ? "o" : ""}">${i === 0 ? "" : i + 1}</div>`)}
            </div>
            <div class="tl-row tl-track">
              ${SEGMENTS.map((s) => html`<div class="tl-seg ${s ? "l" : ""}"></div>`)}
            </div>
            <div class="tl-sc">
              <b>${triL()}</b>
              <div class="thumb">${updown()}</div>
              <b style="margin-left:auto">${triR()}</b>
            </div>
          </div>
        </div>
      </div>
    </div>`;
  }
}
